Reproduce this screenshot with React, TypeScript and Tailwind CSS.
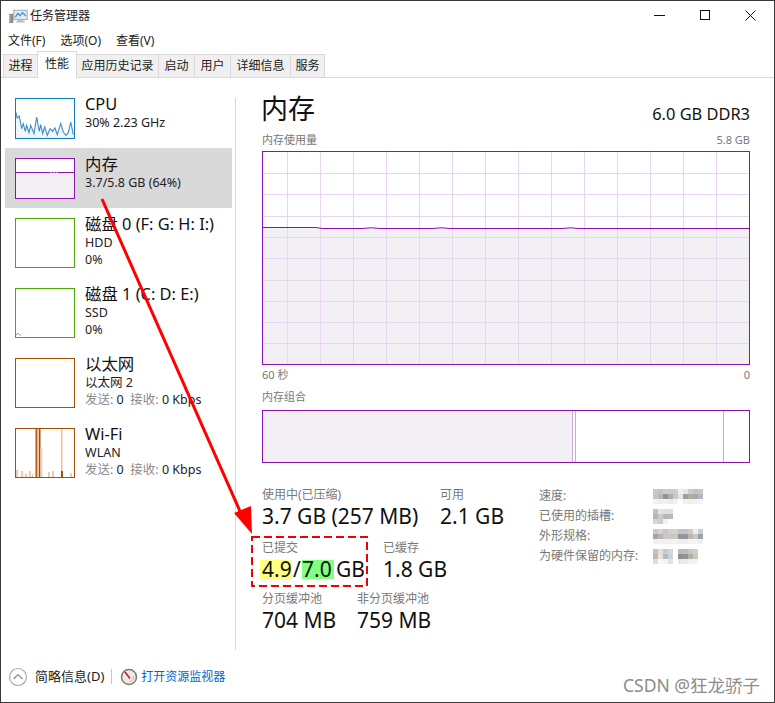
import type { ReactNode } from "react";

const cpuPoints =
  "0.7,14 2.3,20 4.3,18 6.7,30.7 8.3,25.7 10.3,33.3 11.7,27.3 14,34.7 15.7,27.3 19,35.7 21.7,19 24.3,33.3 25.7,26.7 27.7,35.7 29.7,29 32.3,37.3 35,30.7 37.7,33.3 40,30 42.3,36.7 45.7,25.7 48.3,34 51,37.3 53.3,34.7 55.7,24 58.3,36.7";

const tabs = [
  { name: "进程", w: "w-[35px]" },
  { name: "性能", w: "w-[40px]", active: true },
  { name: "应用历史记录", w: "w-[83px]" },
  { name: "启动", w: "w-[37px]" },
  { name: "用户", w: "w-[37px]" },
  { name: "详细信息", w: "w-[61px]" },
  { name: "服务", w: "w-[35px]" },
];

// mosaic over the hardware details
const mosaics: { cols: number; cells: string[] }[] = [
  {
    cols: 10,
    cells: [
      "#c9c8c6", "#c4c3c2", "#cfcdc9", "#c8c9cb", "#d3cdc4", "#f2f0ec", "#ebe6d8", "#c9cbce", "#c9c3b6", "#c6c9cc",
      "#c8c6c4", "#bcb8b3", "#99908a", "#a9afb3", "#cfc9bf", "#e6e6e6", "#9aa1a8", "#b6ac9c", "#a8aaa8", "#b4b8bb",
      "#f1f1f0", "#efefee", "#f2f2f0", "#ececec", "#f3f3f2", "#ffffff", "#f1f1f1", "#efefed", "#f1f1f1", "#f3f3f3",
    ],
  },
  {
    cols: 4,
    cells: [
      "#c6bfc7", "#e6e3e4", "#dde1e6", "#dcdfe2",
      "#b9b2ba", "#c9c9c6", "#b9b7b2", "#b9b9b6",
      "#d6d4d6", "#cccccc", "#f3f3f3", "#ffffff",
    ],
  },
  {
    cols: 10,
    cells: [
      "#c9c6cb", "#d3d2d4", "#c6c3c9", "#cfd1d3", "#d2d1cf", "#c4c2c2", "#c4c2c4", "#cbcac8", "#f1ede4", "#c9ccd0",
      "#a7a2a9", "#b8b2b4", "#cfc5c2", "#c6c8c8", "#c8c8bd", "#97959a", "#96959b", "#bab7b0", "#c6c7c7", "#9ca2ab",
      "#f0eff0", "#f4f0ea", "#f1efee", "#f2f2f2", "#f3f3ef", "#eeeeee", "#eeeeef", "#f3f3f1", "#f5f5f3", "#f0f1f2",
    ],
  },
  {
    cols: 10,
    cells: [
      "#c6c0c8", "#dfe0df", "#c6cbcf", "#d8d8d8", "#ffffff", "#bcb9bc", "#bfbdbc", "#c6c5c0", "#cfcfc9", "#ffffff",
      "#bdb8bf", "#ece2cf", "#a9bcc7", "#d0d0d2", "#ffffff", "#8f8d90", "#959394", "#b2b1a9", "#c7c7be", "#ffffff",
      "#dedcdf", "#f8f8f8", "#f3f4f5", "#e2e2e3", "#ffffff", "#e9e9e9", "#ebebeb", "#f2f2ef", "#f4f4f0", "#ffffff",
    ],
  },
];

function Mosaic({ cols, cells }: { cols: number; cells: string[] }) {
  const rows = cells.length / cols;
  return (
    <svg width={cols * 5} height={rows * 5} shapeRendering="crispEdges">
      {cells.map((c, i) => (
        <rect key={i} x={(i % cols) * 5} y={Math.floor(i / cols) * 5} width={5} height={5} fill={c} />
      ))}
    </svg>
  );
}

function Thumb({ color, tall, children }: { color: string; tall?: boolean; children?: ReactNode }) {
  const h = tall ? 50 : 41;
  return (
    <svg width={60} height={h} viewBox={`0 0 60 ${h}`} className="shrink-0">
      <rect x={0} y={0} width={60} height={h} fill="#fff" />
      {children}
      <rect x={0.5} y={0.5} width={59} height={h - 1} fill="none" stroke={color} shapeRendering="crispEdges" />
    </svg>
  );
}

function SideItem({
  thumb,
  name,
  lines,
  active,
  tall,
}: {
  thumb: ReactNode;
  name: string;
  lines: ReactNode[];
  active?: boolean;
  tall?: boolean;
}) {
  return (
    <div className={`flex w-[227px] pl-[10px] pt-[10px] ${tall ? "h-[70px]" : "h-[60px]"} ${active ? "bg-[#d9d9d9]" : ""}`}>
      {thumb}
      <div className="ml-[10px] -mt-[4px] whitespace-nowrap">
        <div className="text-[16.4px] leading-[20px] text-[#111]">{name}</div>
        {lines.map((l, i) => (
          <div key={i} className="text-[12.5px] leading-[17px] text-[#222]">
            {l}
          </div>
        ))}
      </div>
    </div>
  );
}

function Rate() {
  return (
    <span>
      <span className="text-[#8a8a8a]">发送:</span>&nbsp;0&nbsp; <span className="text-[#8a8a8a]">接收:</span>&nbsp;0 Kbps
    </span>
  );
}

function Stat({ label, value, className }: { label: string; value: ReactNode; className?: string }) {
  return (
    <div className={className}>
      <div className="text-[12px] leading-[16px] text-[#787878]">{label}</div>
      <div className="-mt-[1px] flex h-[28px] items-center whitespace-nowrap text-[21px] leading-[28px] text-[#111]">{value}</div>
    </div>
  );
}

function UsageChart() {
  const vertical = Array.from({ length: 14 }, (_, i) => 25.5 + i * 33);
  const horizontal = Array.from({ length: 9 }, (_, i) => 22.5 + Math.round(i * 21.3));
  return (
    <svg width={488} height={214} className="mt-[3px] block">
      <rect x={0} y={77} width={488} height={137} fill="#f3f0f5" />
      <g stroke="#e8d5f0" shapeRendering="crispEdges">
        {vertical.map((x) => (
          <line key={x} x1={x} x2={x} y1={0} y2={214} />
        ))}
        {horizontal.map((y) => (
          <line key={y} x1={0} x2={488} y1={y} y2={y} />
        ))}
      </g>
      <path
        d="M0 76.5H48Q54 76 60 77.5H100Q110 76 118 77.5H170Q180 76 188 77.5H300Q310 76 316 77.5H488"
        fill="none"
        stroke="#8b12ae"
      />
      <rect x={0.5} y={0.5} width={487} height={213} fill="none" stroke="#8b12ae" shapeRendering="crispEdges" />
    </svg>
  );
}

export default function App() {
  return (
    <div className="relative flex h-[703px] w-[775px] flex-col overflow-hidden border border-[#3a3a3a] bg-white font-['Noto_Sans','Noto_Sans_CJK_SC',sans-serif] text-black">
      {/* title bar */}
      <div className="flex h-[29px] items-center">
        <svg width={19} height={15} viewBox="0 0 24 18" className="ml-[8px] mt-[1px]">
          <rect x={1} y={6} width={4} height={11} fill="#8f9a8c" stroke="#666" strokeWidth={0.5} />
          <rect x={6} y={1} width={17} height={12} fill="#dfe7ef" stroke="#8d9aa6" />
          <path d="M8 10L11 5L14 8L17 4L21 8" fill="none" stroke="#3d8ed6" strokeWidth={1.5} />
          <path d="M11 13h7v2h2v1.5H9V15h2z" fill="#b6bcc0" />
        </svg>
        <span className="ml-[2px] text-[12px] text-[#222]">任务管理器</span>
        <div className="ml-auto flex items-center">
          <svg width={11} height={11} className="mr-[34px]">
            <path d="M0 5.5H11" stroke="#111" />
          </svg>
          <svg width={11} height={11} className="mr-[35px]">
            <rect x={1.5} y={0.5} width={9} height={9} fill="none" stroke="#111" />
          </svg>
          <svg width={11} height={11} className="mr-[18px]">
            <path d="M0.5 0.5L10.5 10.5M10.5 0.5L0.5 10.5" stroke="#111" />
          </svg>
        </div>
      </div>

      {/* menu */}
      <div className="flex h-[21px] items-center gap-[15px] pl-[7px] text-[12px] text-[#222]">
        <span>文件(F)</span>
        <span>选项(O)</span>
        <span>查看(V)</span>
      </div>

      {/* tabs */}
      <div className="flex h-[27px] items-end border-b border-[#d9d9d9] pl-[3px] text-[12px] text-[#222]">
        {tabs.map((t) =>
          t.active ? (
            <div key={t.name} className={`relative z-10 -mb-px -ml-px flex h-[27px] items-center justify-center border border-b-0 border-[#d9d9d9] bg-white pb-[3px] ${t.w}`}>
              {t.name}
            </div>
          ) : (
            <div key={t.name} className={`-ml-px flex h-[23px] items-center justify-center border border-b-0 border-[#d9d9d9] bg-[#f0f0f0] ${t.w}`}>
              {t.name}
            </div>
          ),
        )}
      </div>

      {/* main */}
      <div className="flex flex-1">
        <aside className="ml-[4px] w-[230px] pt-[10px]">
          <SideItem
            name="CPU"
            lines={["30%  2.23 GHz"]}
            thumb={
              <Thumb color="#117dbb">
                <polygon points={`0.7,40 ${cpuPoints} 59,40`} fill="#f1f6fa" />
                <polyline points={cpuPoints} fill="none" stroke="#3d8fc6" strokeWidth={1.1} />
              </Thumb>
            }
          />
          <SideItem
            active
            name="内存"
            lines={["3.7/5.8 GB (64%)"]}
            thumb={
              <Thumb color="#8b12ae">
                <rect x={0} y={14} width={60} height={27} fill="#f3f0f5" />
                <path d="M0 14.5H60" stroke="#8b12ae" shapeRendering="crispEdges" />
                <path d="M35 14.5H44" stroke="#b27cc6" strokeDasharray="2 1" shapeRendering="crispEdges" />
              </Thumb>
            }
          />
          <SideItem tall name="磁盘 0 (F: G: H: I:)" lines={["HDD", "0%"]} thumb={<Thumb tall color="#4da60c" />} />
          <SideItem
            tall
            name="磁盘 1 (C: D: E:)"
            lines={["SSD", "0%"]}
            thumb={
              <Thumb tall color="#4da60c">
                <path d="M1 47L3 45L5 47L6 48" fill="none" stroke="#7dbf4c" />
              </Thumb>
            }
          />
          <SideItem tall name="以太网" lines={["以太网 2", <Rate key="r" />]} thumb={<Thumb tall color="#a74f01" />} />
          <SideItem
            tall
            name="Wi-Fi"
            lines={["WLAN", <Rate key="r" />]}
            thumb={
              <Thumb tall color="#a74f01">
                <rect x={20.5} y={1} width={2} height={49} fill="#b5581a" />
                <rect x={22.5} y={1} width={2} height={49} fill="#f0c7ad" />
                <rect x={24} y={1} width={1.5} height={49} fill="#a74f01" />
                <rect x={25.5} y={20} width={2} height={30} fill="#f2d6c4" />
                <rect x={46} y={1} width={1.5} height={49} fill="#f0bfa2" />
                <rect x={46} y={43} width={2} height={7} fill="#a74f01" />
                <g fill="#f2c8b0">
                  <rect x={1} y={42} width={2} height={8} />
                  <rect x={6} y={43} width={2} height={7} />
                  <rect x={10} y={46} width={2} height={4} />
                  <rect x={14} y={43} width={2} height={7} />
                  <rect x={17} y={46} width={1} height={4} />
                  <rect x={33} y={44} width={2} height={6} />
                  <rect x={37} y={43} width={2} height={7} />
                  <rect x={55} y={45} width={2} height={5} />
                </g>
              </Thumb>
            }
          />
        </aside>

        <div className="mt-[20px] h-[552px] w-px bg-[#d6d6d6]" />

        <main className="ml-[26px] w-[488px]">
          <div className="mt-[13px] flex items-end justify-between">
            <span className="-ml-px text-[27px] leading-[36px] text-[#111]">内存</span>
            <span className="mb-[2px] text-[16.4px] leading-[22px] text-[#111]">6.0 GB DDR3</span>
          </div>
          <div className="mt-[5px] flex justify-between text-[11px] leading-[16px] text-[#787878]">
            <span>内存使用量</span>
            <span>5.8 GB</span>
          </div>
          <UsageChart />
          <div className="mt-[2px] flex justify-between text-[11px] leading-[16px] text-[#787878]">
            <span>60 秒</span>
            <span>0</span>
          </div>
          <div className="mt-[6px] text-[11px] leading-[16px] text-[#787878]">内存组合</div>
          <div className="mt-[5px] flex h-[53px] border border-[#8b12ae]">
            <div className="w-[310px] border-r border-[#cfa9dc] bg-[#f3f0f5]" />
            <div className="ml-[2px] w-[149px] border-x border-[#cfa9dc]" />
          </div>

          <div className="mt-[24px] flex">
            <div className="w-[277px]">
              <div className="flex">
                <Stat label="使用中(已压缩)" value="3.7 GB (257 MB)" className="w-[178px]" />
                <Stat label="可用" value="2.1 GB" />
              </div>
              <div className="mt-[10px] flex">
                <Stat
                  label="已提交"
                  className="w-[121px]"
                  value={
                    <>
                      <span className="-ml-[2px] h-[19px] w-[32px] bg-[#ffff80] pl-[2px] leading-[19px]">4.9</span>
                      <span className="w-[10px] text-center">/</span>
                      <span className="h-[19px] w-[32px] bg-[#80ff80] leading-[19px]">7.0</span>
                      <span className="ml-[2px]">GB</span>
                    </>
                  }
                />
                <Stat label="已缓存" value="1.8 GB" />
              </div>
              <div className="mt-[8px] flex">
                <Stat label="分页缓冲池" value="704 MB" className="w-[95px]" />
                <Stat label="非分页缓冲池" value="759 MB" />
              </div>
            </div>
            <div className="-mt-[1px] text-[12px] leading-[20px] text-[#787878]">
              {["速度:", "已使用的插槽:", "外形规格:", "为硬件保留的内存:"].map((l, i) => (
                <div key={l} className="flex h-[20px] items-center">
                  <span className="w-[114px] whitespace-nowrap">{l}</span>
                  <Mosaic {...mosaics[i]} />
                </div>
              ))}
            </div>
          </div>
        </main>
      </div>

      {/* footer */}
      <div className="flex h-[51px] items-center text-[12px]">
        <svg width={20} height={20} className="ml-[7px]">
          <circle cx={10} cy={10} r={8.5} fill="#fff" stroke="#ababab" strokeWidth={1.2} />
          <path d="M5.5 12L10 7.5L14.5 12" fill="none" stroke="#8a8a8a" strokeWidth={1.2} />
        </svg>
        <span className="ml-[7px] text-[13px] text-[#222]">简略信息(D)</span>
        <div className="ml-[7px] h-[15px] w-px bg-[#c8c8c8]" />
        <svg width={18} height={18} className="ml-[8px]">
          <circle cx={9} cy={9} r={7.5} fill="#eeeae4" stroke="#7d7a74" strokeWidth={1.5} />
          <path d="M5 4L10 10.5" stroke="#d2232a" strokeWidth={1.8} />
          <path d="M10 13.5A4.5 4.5 0 0 0 13.5 8" fill="none" stroke="#b8b2a8" />
        </svg>
        <span className="ml-[3px] text-[#0066cc]">打开资源监视器</span>
      </div>

      {/* annotations pasted on top of the screenshot */}
      <svg width={775} height={703} className="pointer-events-none absolute -left-px -top-px">
        <path d="M102 199L243 518" stroke="#ff0000" strokeWidth={3} />
        <polygon points="252,534 234,513 251,506" fill="#ff0000" />
        <rect x={252} y={537} width={115} height={49} fill="none" stroke="#f00000" strokeWidth={2} strokeDasharray="8 4" />
      </svg>
      <span className="absolute left-[622px] top-[672px] whitespace-nowrap text-[17.5px] leading-[24px] text-[#8c8c8c]">CSDN @狂龙骄子</span>
    </div>
  );
}
